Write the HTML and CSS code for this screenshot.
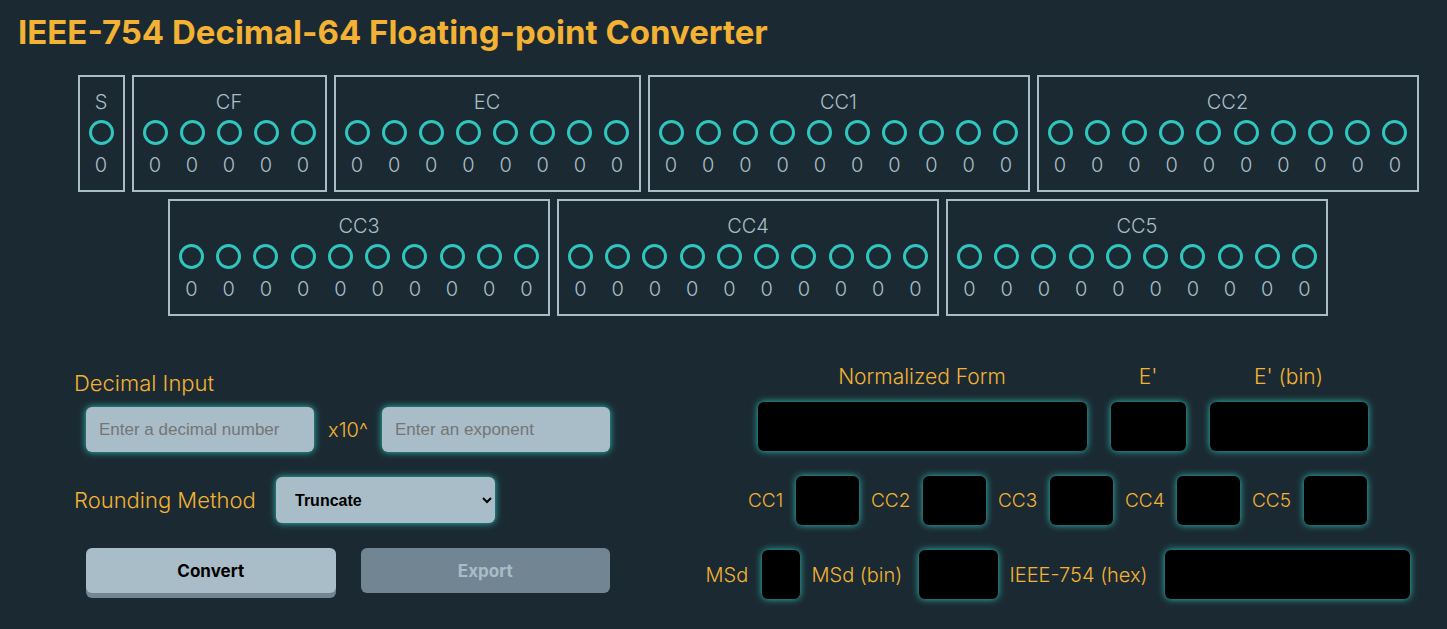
FILE: index.html
```html
<!DOCTYPE html>
<html lang="en">
<head>
<meta charset="utf-8">
<meta name="viewport" content="width=device-width, initial-scale=1">
<title>IEEE-754 Decimal-64 Floating-point Converter</title>
<link rel="stylesheet" href="styles.css">
</head>
<body>
<h1 class="title">IEEE-754 Decimal-64 Floating-point Converter</h1>
<main>
  <section class="board" id="board" aria-label="Bit fields"></section>
  <div class="panels">
    <form class="entry">
      <label class="entry-label" for="decimal">Decimal Input</label>
      <div class="number-row">
        <input class="field" id="decimal" type="text" placeholder="Enter a decimal number">
        <label class="power" for="exponent">x10^</label>
        <input class="field" id="exponent" type="text" placeholder="Enter an exponent">
      </div>
      <div class="rounding-row">
        <label for="rounding">Rounding Method</label>
        <select class="picker" id="rounding">
          <option>Truncate</option>
          <option>Round Up</option>
          <option>Round Down</option>
          <option>Round to Nearest</option>
        </select>
      </div>
      <div class="actions">
        <button class="button" type="button">Convert</button>
        <button class="button" type="button" disabled>Export</button>
      </div>
    </form>
    <section class="results" aria-label="Results">
      <div class="result-row stacked-row">
        <div class="stacked"><label for="normal">Normalized Form</label><input class="out w-normal" id="normal" readonly></div>
        <div class="stacked"><label for="ep">E'</label><input class="out w-ep" id="ep" readonly></div>
        <div class="stacked"><label for="epbin">E' (bin)</label><input class="out w-epbin" id="epbin" readonly></div>
      </div>
      <div class="result-row cc-row">
        <label class="l-cc1" for="cc1">CC1</label><input class="out w-cc" id="cc1" readonly>
        <label class="l-cc" for="cc2">CC2</label><input class="out w-cc" id="cc2" readonly>
        <label class="l-cc" for="cc3">CC3</label><input class="out w-cc" id="cc3" readonly>
        <label class="l-cc" for="cc4">CC4</label><input class="out w-cc" id="cc4" readonly>
        <label class="l-cc" for="cc5">CC5</label><input class="out w-cc" id="cc5" readonly>
      </div>
      <div class="result-row">
        <label class="l-msd" for="msd">MSd</label><input class="out w-msd" id="msd" readonly>
        <label class="l-msdbin" for="msdbin">MSd (bin)</label><input class="out w-msdbin" id="msdbin" readonly>
        <label class="l-hex" for="hex">IEEE-754 (hex)</label><input class="out w-hex" id="hex" readonly>
      </div>
    </section>
  </div>
</main>
<script src="board.js"></script>
</body>
</html>
```
FILE: styles.css
```css
* { box-sizing: border-box; }

body {
  margin: 0;
  background: #1b2a32;
  color: #f4b234;
  font: 350 20px/24px Inter, "Open Sans", sans-serif;
}

.title {
  margin: 0;
  padding: 12px 18px 0;
  font-size: 33px;
  line-height: 40px;
  font-weight: 700;
}

.board {
  display: grid;
  gap: 7px;
  padding: 23px 0 0 49px;
}

.board-row {
  display: flex;
  justify-content: center;
  gap: 7px;
}

.group {
  padding: 13px 9px;
  border: 2px solid #a8bdc8;
  color: #a8bdc8;
  font-weight: 300;
  text-align: center;
}

.bits-1 { width: 47px; }
.bits-5 { width: 195px; }
.bits-8 { width: 307px; }
.bits-10 { width: 382px; }

.bits {
  display: flex;
  justify-content: space-between;
  margin-top: 6px;
}

.bit {
  display: grid;
  gap: 8px;
}

.lamp {
  width: 25px;
  height: 25px;
  border: 3px solid #30c5be;
  border-radius: 50%;
}

.panels {
  display: flex;
  gap: 58px;
  padding: 49px 0 28px 74px;
}

.entry {
  width: 536px;
  padding-top: 6px;
}

.entry-label {
  display: block;
  font-size: 22px;
}

.number-row {
  display: flex;
  align-items: center;
  justify-content: space-between;
  margin-top: 12px;
  padding-left: 12px;
}

.field,
.picker {
  border: 0;
  border-radius: 6px;
  background: #a8bdc8;
  box-shadow: 0 0 7px #30c5be;
}

.field {
  width: 228px;
  height: 45px;
  padding: 0 13px;
  font: 400 17px "Liberation Sans", Arial, sans-serif;
}

.field::placeholder { color: #757575; }

.rounding-row {
  display: flex;
  align-items: center;
  margin-top: 25px;
}

.rounding-row label {
  width: 202px;
  font-size: 22px;
}

.picker {
  width: 219px;
  height: 46px;
  padding: 0 0 0 15px;
  color: #000;
  font: 700 16px "Liberation Sans", Arial, sans-serif;
}

.actions {
  display: grid;
  grid-template-columns: 1fr 1fr;
  gap: 25px;
  margin-top: 25px;
  padding-left: 12px;
}

.button {
  height: 45px;
  border: 0;
  border-radius: 6px;
  background: #a8bdc8;
  box-shadow: 0 5px #718692;
  color: #000;
  font: 700 17px Inter, "Open Sans", sans-serif;
}

.button:disabled {
  background: #718692;
  box-shadow: none;
  color: #a8bdc8;
}

.results {
  display: grid;
  flex: 1;
  gap: 25px;
  align-content: start;
}

.result-row {
  display: flex;
  justify-content: center;
  align-items: center;
  gap: 12px;
}

.stacked-row {
  gap: 24px;
  padding-left: 10px;
}

.stacked {
  display: grid;
  gap: 13px;
  font-size: 21px;
  text-align: center;
}

.cc-row { font-size: 19px; }

.out {
  height: 49px;
  padding: 0 8px;
  border: 0;
  border-radius: 6px;
  background: #000;
  box-shadow: 0 0 7px #30c5be;
  color: #f4b234;
  font: inherit;
}

.l-cc1 { width: 36px; }
.l-cc { width: 40px; }
.l-msd { width: 44px; }
.l-msdbin { width: 95px; }
.l-hex { width: 143px; }
.w-normal { width: 329px; }
.w-ep { width: 75px; }
.w-epbin { width: 158px; }
.w-cc { width: 63px; }
.w-msd { width: 38px; }
.w-msdbin { width: 79px; }
.w-hex { width: 245px; }
```
FILE: board.js
```js
const rows = [
  [["S", 1], ["CF", 5], ["EC", 8], ["CC1", 10], ["CC2", 10]],
  [["CC3", 10], ["CC4", 10], ["CC5", 10]],
];

const bit = '<div class="bit"><span class="lamp"></span><span>0</span></div>';

document.getElementById("board").innerHTML = rows.map((groups) =>
  '<div class="board-row">' + groups.map(([name, count]) =>
    `<div class="group bits-${count}"><div>${name}</div><div class="bits">${bit.repeat(count)}</div></div>`
  ).join("") + "</div>"
).join("");
```
